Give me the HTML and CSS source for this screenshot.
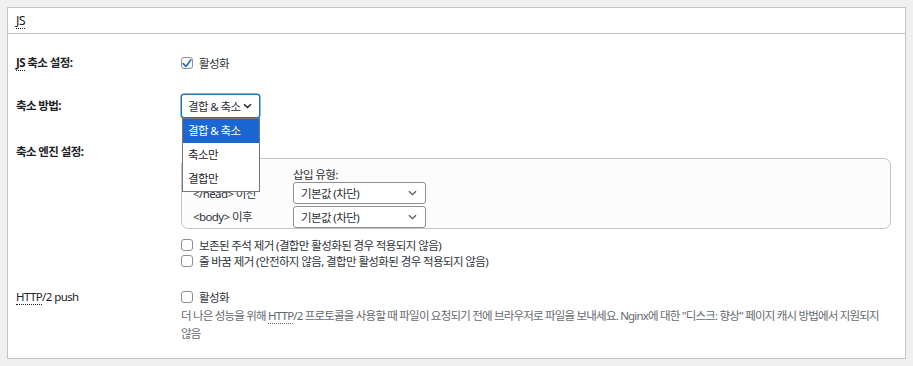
FILE: index.html
```html
<!DOCTYPE html>
<html lang="ko">
<head>
<meta charset="utf-8">
<title>JS</title>
<link rel="stylesheet" href="styles.css">
</head>
<body>
<div class="panel">
  <h3 class="panel-head"><abbr class="abbr" title="JavaScript">JS</abbr></h3>
  <div class="panel-body">

    <div class="row row-first">
      <div class="th"><abbr class="abbr" title="JavaScript">JS</abbr> 축소 설정:</div>
      <div class="td">
        <label class="check">
          <span class="cb cb-on"><svg width="10" height="9" viewBox="0 0 10 9"><path d="M1.2 4.6 L3.9 7.4 L8.8 1" fill="none" stroke="#2271b1" stroke-width="1.7" stroke-linecap="round" stroke-linejoin="round"/></svg></span>
          <span>활성화</span>
        </label>
      </div>
    </div>

    <div class="row row-method">
      <div class="th th-tall">축소 방법:</div>
      <div class="td">
        <div class="select-wrap">
          <div class="select select-focus">
            <span>결합 &amp; 축소</span>
            <svg class="chev" width="9" height="6" viewBox="0 0 9 6"><path d="M1 1.2 L4.5 4.6 L8 1.2" fill="none" stroke="#1d2327" stroke-width="1.4"/></svg>
          </div>
          <ul class="dropdown">
            <li class="opt opt-active">결합 &amp; 축소</li>
            <li class="opt">축소만</li>
            <li class="opt">결합만</li>
          </ul>
        </div>
      </div>
    </div>

    <div class="row row-engine">
      <div class="th">축소 엔진 설정:</div>
      <div class="td td-engine">
        <fieldset class="areas">
          <legend class="areas-legend">영역 내 작업:</legend>
          <div class="areas-grid">
            <span class="area-head-empty"></span>
            <span class="area-head">삽입 유형:</span>
            <span class="area-label">&lt;/head&gt; 이전</span>
            <div class="select select-sm">
              <span>기본값 (차단)</span>
              <svg class="chev" width="9" height="6" viewBox="0 0 9 6"><path d="M1 1.2 L4.5 4.6 L8 1.2" fill="none" stroke="#50575e" stroke-width="1.3"/></svg>
            </div>
            <span class="area-label">&lt;body&gt; 이후</span>
            <div class="select select-sm">
              <span>기본값 (차단)</span>
              <svg class="chev" width="9" height="6" viewBox="0 0 9 6"><path d="M1 1.2 L4.5 4.6 L8 1.2" fill="none" stroke="#50575e" stroke-width="1.3"/></svg>
            </div>
          </div>
        </fieldset>
        <div class="opts">
          <label class="check check-sm">
            <span class="cb"></span>
            <span>보존된 주석 제거 (결합만 활성화된 경우 적용되지 않음)</span>
          </label>
          <label class="check check-sm">
            <span class="cb"></span>
            <span>줄 바꿈 제거 (안전하지 않음, 결합만 활성화된 경우 적용되지 않음)</span>
          </label>
        </div>
      </div>
    </div>

    <div class="row row-push">
      <div class="th th-normal"><abbr class="abbr" title="Hypertext Transfer Protocol">HTTP</abbr>/2 push</div>
      <div class="td">
        <label class="check">
          <span class="cb"></span>
          <span>활성화</span>
        </label>
        <p class="desc">더 나은 성능을 위해 <abbr class="abbr" title="Hypertext Transfer Protocol">HTTP</abbr>/2 프로토콜을 사용할 때 파일이 요청되기 전에 브라우저로 파일을 보내세요. Nginx에 대한 "디스크: 향상" 페이지 캐시 방법에서 지원되지 않음</p>
      </div>
    </div>

  </div>
</div>
</body>
</html>
```
FILE: styles.css
```css
* { box-sizing: border-box; }

html, body {
  margin: 0;
  background: #f0f0f1;
}

body {
  padding: 7px;
  font-family: "Noto Sans", "Noto Sans CJK KR", sans-serif;
  font-size: 11.5px;
  letter-spacing: -0.6px;
  color: #1d2327;
}

.abbr {
  text-decoration: none;
  border-bottom: 1px dotted #1d2327;
}

.panel {
  background: #fff;
  border: 1px solid #c3c4c7;
  height: 352px;
}

.panel-head {
  margin: 0;
  height: 26px;
  padding: 0 8px;
  border-bottom: 1px solid #c3c4c7;
  font-size: 12.5px;
  font-weight: 400;
  line-height: 26px;
}

.panel-head .abbr {
  line-height: 14px;
  display: inline-block;
}

.panel-body {
  padding: 0 14px 0 8px;
}

.row {
  display: grid;
  grid-template-columns: 165px 1fr;
  align-items: start;
}

.th {
  font-weight: 700;
  line-height: 20px;
}

.th-normal { font-weight: 400; }
.th-tall { line-height: 24px; }

.row-first { padding-top: 19px; padding-bottom: 10px; }
.row-method { padding-top: 11px; padding-bottom: 12px; }
.row-engine { padding-top: 12px; }
.row-push { padding-top: 18px; }

.td-engine { margin-top: 8px; }

.check {
  display: flex;
  align-items: center;
  gap: 6px;
  height: 20px;
  color: #2c3338;
}

.check-sm { height: 16px; }

.cb {
  width: 12px;
  height: 12px;
  flex: none;
  border: 1px solid #8c8f94;
  border-radius: 3px;
  background: #fff;
  display: flex;
  align-items: center;
  justify-content: center;
}

.select-wrap {
  position: relative;
  width: 79px;
}

.select {
  display: flex;
  align-items: center;
  justify-content: space-between;
  height: 24px;
  padding: 0 7px 0 6px;
  border: 1px solid #8c8f94;
  border-radius: 3px;
  background: #fff;
  color: #2c3338;
  white-space: nowrap;
}

.select-focus {
  border-color: #2271b1;
  box-shadow: 0 0 0 0.5px #2271b1;
}

.select-sm {
  height: 22px;
  width: 133px;
  padding: 0 8px 0 7px;
}

.chev { flex: none; }

.dropdown {
  position: absolute;
  top: 24px;
  left: 1px;
  width: 78px;
  margin: 0;
  padding: 0;
  list-style: none;
  background: #fff;
  border: 1px solid #767676;
  z-index: 5;
}

.opt {
  height: 24px;
  line-height: 24px;
  padding: 0 5px;
  color: #1d2327;
  white-space: nowrap;
}

.opt-active {
  background: #1a67d4;
  color: #fff;
}

.areas {
  margin: 0;
  padding: 0 10px 1px 11px;
  border: 1px solid #c3c4c7;
  border-radius: 7px;
  background: #fcfcfc;
  min-width: 0;
}

.areas-legend {
  padding: 0 2px;
  line-height: 16px;
}

.areas-grid {
  display: grid;
  grid-template-columns: 100px 133px;
  grid-template-rows: 15px 22px 22px;
  row-gap: 1px;
  align-items: center;
}

.areas-grid .select-sm:last-child { margin-top: 1px; }

.area-head { color: #2c3338; }
.area-label { color: #2c3338; }

.opts {
  margin-top: 8px;
}

.desc {
  margin: 0;
  line-height: 18px;
  color: #646970;
  max-width: 712px;
  letter-spacing: -0.8px;
  word-break: keep-all;
}

.desc .abbr { border-bottom-color: #646970; }
```
